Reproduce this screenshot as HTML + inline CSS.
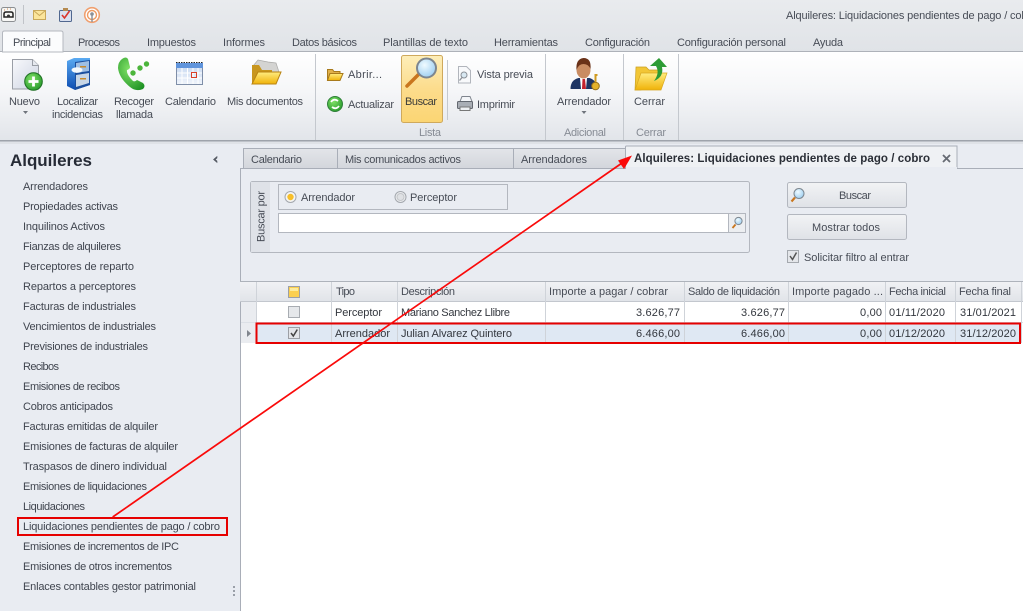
<!DOCTYPE html>
<html><head><meta charset="utf-8"><style>
html,body{margin:0;padding:0;width:1023px;height:611px;overflow:hidden;background:#fff}
svg{display:block}
text{font-family:"Liberation Sans",sans-serif;font-size:11px;fill:#474c56}
.s text{fill:#40454f}
.g text{fill:#868b94}
.d text{fill:#33373e}
</style></head><body>
<svg width="1023" height="611" viewBox="0 0 1023 611" xmlns="http://www.w3.org/2000/svg">
<defs>
<linearGradient id="rib" x1="0" y1="0" x2="0" y2="1"><stop offset="0" stop-color="#fff"/><stop offset=".45" stop-color="#f5f6f8"/><stop offset="1" stop-color="#e2e5ea"/></linearGradient>
<linearGradient id="top" x1="0" y1="0" x2="0" y2="1"><stop offset="0" stop-color="#e9ebee"/><stop offset="1" stop-color="#e0e3e7"/></linearGradient>
<linearGradient id="hl" x1="0" y1="0" x2="0" y2="1"><stop offset="0" stop-color="#fdeeb9"/><stop offset=".5" stop-color="#fcdc8c"/><stop offset="1" stop-color="#fbd573"/></linearGradient>
<linearGradient id="tab" x1="0" y1="0" x2="0" y2="1"><stop offset="0" stop-color="#e3e5e9"/><stop offset="1" stop-color="#d3d6dc"/></linearGradient>
<linearGradient id="hd" x1="0" y1="0" x2="0" y2="1"><stop offset="0" stop-color="#f1f2f5"/><stop offset="1" stop-color="#e0e3e8"/></linearGradient>
<linearGradient id="btn" x1="0" y1="0" x2="0" y2="1"><stop offset="0" stop-color="#f2f3f5"/><stop offset="1" stop-color="#dfe2e7"/></linearGradient>
<linearGradient id="yel" x1="0" y1="0" x2="0" y2="1"><stop offset="0" stop-color="#ffec80"/><stop offset="1" stop-color="#f0b208"/></linearGradient>
<linearGradient id="doc" x1="0" y1="0" x2="1" y2="1"><stop offset="0" stop-color="#f8f9fc"/><stop offset="1" stop-color="#cdd3e2"/></linearGradient>
<linearGradient id="blu" x1="0" y1="0" x2="0" y2="1"><stop offset="0" stop-color="#5aaaf2"/><stop offset="1" stop-color="#0d4cb0"/></linearGradient>
<linearGradient id="cal" x1="0" y1="0" x2="0" y2="1"><stop offset="0" stop-color="#c4d6f0"/><stop offset="1" stop-color="#f0f4fb"/></linearGradient>
<radialGradient id="grn" cx=".4" cy=".35" r=".8"><stop offset="0" stop-color="#7fe066"/><stop offset="1" stop-color="#1b8f22"/></radialGradient>
<radialGradient id="lens" cx=".4" cy=".35" r=".8"><stop offset="0" stop-color="#f0fbff"/><stop offset="1" stop-color="#8ec6ee"/></radialGradient>
</defs>

<!-- base -->
<rect width="1023" height="611" fill="#fff"/>
<rect width="1023" height="52" fill="url(#top)"/>
<rect y="51" width="1023" height="1" fill="#aeb2b9"/>
<rect y="52" width="1023" height="88" fill="url(#rib)"/>
<rect y="140" width="1023" height="1.5" fill="#9ea3ab"/>
<rect y="141.500" width="1023" height="3" fill="#dfe2e7"/>
<rect y="144" width="1023" height="137" fill="#e9ecf2"/>
<rect y="144" width="240" height="467" fill="#e9ecf2"/>
<rect x="240" y="168" width="1" height="443" fill="#a9aeb8"/>

<!-- title bar icons -->
<rect x="1.500" y="7.500" width="14" height="14" rx="2" fill="#f7f7f5" stroke="#8c8f92"/>
<path d="M4 17v-3q0-2 2-2h5q2 0 2 2v3z" fill="none" stroke="#222" stroke-width="1.500"/>
<circle cx="8.500" cy="16" r="1.500" fill="#333"/>
<path d="M4 10h1M7 9h1M10 9h1" stroke="#c85" stroke-width="1"/>
<rect x="23" y="5" width="1" height="19" fill="#c0c3c8"/>
<rect x="33.500" y="10.500" width="12" height="9" fill="#fbe59b" stroke="#c9a85a"/>
<path d="M33.500 10.500l6 5 6-5" fill="none" stroke="#c9a85a"/>
<rect x="59.500" y="10.500" width="12" height="11" rx="1" fill="#d9e0ef" stroke="#50678f"/>
<rect x="63" y="8" width="5" height="3" fill="#b58a50"/>
<path d="M62 15l2.500 3 5-7" fill="none" stroke="#d9342a" stroke-width="1.600"/>
<circle cx="92" cy="15" r="7.300" fill="#fff" stroke="#f0a070" stroke-width="1.600"/>
<circle cx="92" cy="15" r="4.500" fill="none" stroke="#ee9a62" stroke-width="1.400"/>
<circle cx="92" cy="14" r="1.800" fill="#8a8f96"/>
<rect x="91.300" y="15" width="1.400" height="7" fill="#8a8f96"/>

<text x="786" y="19" textLength="251">Alquileres: Liquidaciones pendientes de pago / cobro</text>

<!-- ribbon tabs -->
<path d="M2.500 52V33q0-2 2-2h56.500q2 0 2 2v19z" fill="#fbfcfd" stroke="#b4b8bf"/>
<g>
<text x="13" y="46" textLength="38">Principal</text>
<text x="78" y="46" textLength="42">Procesos</text>
<text x="147" y="46" textLength="49">Impuestos</text>
<text x="223" y="46" textLength="42">Informes</text>
<text x="292" y="46" textLength="65">Datos básicos</text>
<text x="383" y="46" textLength="85">Plantillas de texto</text>
<text x="494" y="46" textLength="64">Herramientas</text>
<text x="585" y="46" textLength="65">Configuración</text>
<text x="677" y="46" textLength="109">Configuración personal</text>
<text x="813" y="46" textLength="30">Ayuda</text>
</g>

<!-- ribbon separators -->
<rect x="315" y="54" width="1" height="86" fill="#c4c8ce"/>
<rect x="545" y="54" width="1" height="86" fill="#c4c8ce"/>
<rect x="623" y="54" width="1" height="86" fill="#c4c8ce"/>
<rect x="678" y="54" width="1" height="86" fill="#c4c8ce"/>
<rect x="447" y="60" width="1" height="60" fill="#c4c8ce"/>

<!-- Nuevo -->
<path d="M12.500 59.500h20l6 6v23.500h-26z" fill="url(#doc)" stroke="#9a9ea6"/>
<path d="M32.500 59.500v6h6" fill="#e6e9ef" stroke="#9a9ea6"/>
<circle cx="33.500" cy="81.500" r="8.800" fill="url(#grn)" stroke="#1d6f22"/>
<path d="M33.500 76.500v10M28.500 81.500h10" stroke="#fff" stroke-width="2.800"/>
<path d="M23 111h5l-2.500 3z" fill="#6f747c"/>

<!-- Localizar cabinet -->
<path d="M67 61l7-3h16v27l-15 5-8-4z" fill="url(#blu)"/>
<path d="M75 62l15-2v25l-15 5z" fill="#1c4f9e"/>
<path d="M76 63l13-2v10l-13 2z" fill="#9fbfe4"/>
<path d="M76 75l13-2v10l-13 4z" fill="#c8d6e6"/>
<rect x="80" y="66" width="6" height="1.500" fill="#c88a2c"/>
<rect x="80" y="78" width="6" height="1.500" fill="#c88a2c"/>
<ellipse cx="77" cy="70" rx="5.500" ry="2.800" fill="#f4f8fc"/>

<!-- Recoger phone -->
<path d="M122 59q4-3 6 0l2 8q0 2-3 3q-1 4 6 11q2 1 4-1l6 3q3 3 0 6q-7 3-13-2q-11-9-12-19q0-6 4-9z" fill="url(#grn)"/>
<circle cx="133" cy="73" r="2.700" fill="#4cb53c"/>
<circle cx="140" cy="68" r="2.700" fill="#4cb53c"/>
<circle cx="146.500" cy="64" r="2.700" fill="#4cb53c"/>

<!-- Calendario -->
<rect x="176.500" y="63.500" width="26" height="21" fill="url(#cal)" stroke="#7f8ea8"/>
<rect x="176" y="63" width="27" height="5" fill="#5f94dc"/>
<path d="M176 62.500h27" stroke="#222" stroke-dasharray="1.500 1"/>
<path d="M177 73h25M177 78h25M182 68v16M187.500 68v16M193 68v16M198 68v16" stroke="#fff" stroke-width="1"/>
<rect x="191.500" y="72.500" width="5" height="5" fill="none" stroke="#d9402a"/>

<!-- Mis documentos -->
<path d="M253 66l5-6 10 2 8 1 3 9-25 2z" fill="#d4d4d2" stroke="#a9a9a7" stroke-width=".7"/>
<path d="M252 65h7l3 5h10v4l-12 10h-8z" fill="#c8961e"/>
<path d="M258 72h23l-5 12h-24z" fill="url(#yel)" stroke="#b98412"/>

<!-- ribbon labels -->
<g>
<text x="9" y="105" textLength="31">Nuevo</text>
<text x="57" y="105" textLength="41">Localizar</text>
<text x="52" y="118" textLength="51">incidencias</text>
<text x="114" y="105" textLength="40">Recoger</text>
<text x="116" y="118" textLength="37">llamada</text>
<text x="165" y="105" textLength="51">Calendario</text>
<text x="227" y="105" textLength="76">Mis documentos</text>
<text x="348" y="78" textLength="34">Abrir...</text>
<text x="348" y="108" textLength="46">Actualizar</text>
<text x="477" y="78" textLength="56">Vista previa</text>
<text x="477" y="108" textLength="38">Imprimir</text>
<text x="557" y="105" textLength="54">Arrendador</text>
<text x="634" y="105" textLength="31">Cerrar</text>
</g>
<g class="g">
<text x="419" y="136" textLength="22">Lista</text>
<text x="564" y="136" textLength="42">Adicional</text>
<text x="636" y="136" textLength="30">Cerrar</text>
</g>
<path d="M581.500 111h5l-2.500 3z" fill="#6f747c"/>

<!-- small ribbon icons -->
<path d="M327.500 69.500h5l1.500 2h6v2h-10l-2.500 7z" fill="#e0b04a" stroke="#a87a1c"/>
<path d="M330 73.500h13l-3 7h-12.500z" fill="url(#yel)" stroke="#a87a1c"/>
<circle cx="335" cy="104" r="7.500" fill="url(#grn)" stroke="#2f7f3a"/>
<path d="M331 102q3-4 7-1M339 106q-3 4-7 1" fill="none" stroke="#fff" stroke-width="1.800"/>

<!-- Buscar big -->
<rect x="401.500" y="55.500" width="41" height="67" rx="2" fill="url(#hl)" stroke="#cfa95c"/>
<path d="M407 86l11-11" stroke="#c9761e" stroke-width="3.500" stroke-linecap="round"/>
<circle cx="426.500" cy="68" r="9.500" fill="url(#lens)" stroke="#7d868f" stroke-width="2"/>
<text x="405" y="105" textLength="32" style="fill:#3a3a38">Buscar</text>

<!-- Vista previa / imprimir -->
<path d="M458.500 66.500h8l4 4v12.500h-12z" fill="#f8f9fb" stroke="#b1b5bc"/>
<circle cx="464" cy="75" r="3" fill="#d8e8f2" stroke="#8a8f96"/>
<path d="M462 77.500l-2.500 3" stroke="#8a8f96" stroke-width="1.300"/>
<path d="M462 96.500h8l2 5h-12z" fill="#f4f6f9" stroke="#7f858e"/>
<rect x="457.500" y="101.500" width="15" height="7" rx="1" fill="#a9aeb5" stroke="#636870"/>
<rect x="460" y="107" width="10" height="3.500" fill="#eef0f3" stroke="#777"/>

<!-- Arrendador person -->
<path d="M570.500 89q0-9 8-11h11q7 2 8 11z" fill="#1f3564"/>
<path d="M580 78h7l-1 11h-5z" fill="#fff"/>
<path d="M582.500 79h2.500l1 10h-4z" fill="#c4222c"/>
<ellipse cx="583.500" cy="70" rx="7" ry="8.500" fill="#c98c62"/>
<path d="M576.500 70q-1-11 7-12q8 0 7 11q-2-5-7-5q-5 0-7 6z" fill="#6a3218"/>
<circle cx="595.500" cy="86" r="3.800" fill="#e4b22c" stroke="#96701a"/>
<path d="M595.500 82v-7h2" fill="none" stroke="#d09a20" stroke-width="2"/>

<!-- Cerrar folder -->
<path d="M636 67h10l3 3h11v6l-19 14h-6z" fill="#f2c636" stroke="#caa022" stroke-width=".7"/>
<path d="M641 73h26l-6 17h-26z" fill="url(#yel)" stroke="#d8a820" stroke-width=".7"/>
<path d="M654 81q6-8 2-15h-6l9-8 8 9h-5q2 10-8 14z" fill="#2d9c35"/>

<!-- sidebar -->
<text x="10" y="166" textLength="82" style="font-size:17px;font-weight:bold;fill:#262b36">Alquileres</text>
<path d="M217 156.500l-3.500 3 3.500 3v-1.500l-1.800-1.500 1.800-1.500z" fill="#555a63" stroke="#555a63" stroke-width=".6"/>
<g class="s">
<text x="23" y="190" textLength="65">Arrendadores</text>
<text x="23" y="210" textLength="95">Propiedades activas</text>
<text x="23" y="230" textLength="82">Inquilinos Activos</text>
<text x="23" y="250" textLength="98">Fianzas de alquileres</text>
<text x="23" y="270" textLength="111">Perceptores de reparto</text>
<text x="23" y="290" textLength="113">Repartos a perceptores</text>
<text x="23" y="310" textLength="113">Facturas de industriales</text>
<text x="23" y="330" textLength="133">Vencimientos de industriales</text>
<text x="23" y="350" textLength="125">Previsiones de industriales</text>
<text x="23" y="370" textLength="36">Recibos</text>
<text x="23" y="390" textLength="97">Emisiones de recibos</text>
<text x="23" y="410" textLength="90">Cobros anticipados</text>
<text x="23" y="430" textLength="135">Facturas emitidas de alquiler</text>
<text x="23" y="450" textLength="155">Emisiones de facturas de alquiler</text>
<text x="23" y="470" textLength="144">Traspasos de dinero individual</text>
<text x="23" y="490" textLength="124">Emisiones de liquidaciones</text>
<text x="23" y="510" textLength="62">Liquidaciones</text>
<text x="23" y="530" textLength="197">Liquidaciones pendientes de pago / cobro</text>
<text x="23" y="550" textLength="156">Emisiones de incrementos de IPC</text>
<text x="23" y="570" textLength="149">Emisiones de otros incrementos</text>
<text x="23" y="590" textLength="173">Enlaces contables gestor patrimonial</text>
</g>
<path d="M234 586v12" stroke="#9a9fa8" stroke-width="2" stroke-dasharray="2 2"/>

<!-- doc tabs -->
<rect x="243.500" y="148.500" width="94" height="20" fill="url(#tab)" stroke="#a9aeb8"/>
<rect x="337.500" y="148.500" width="176" height="20" fill="url(#tab)" stroke="#a9aeb8"/>
<rect x="513.500" y="148.500" width="112" height="20" fill="url(#tab)" stroke="#a9aeb8"/>
<rect x="240" y="168" width="783" height="1" fill="#a9aeb8"/>
<path d="M625.500 169v-22q0-1 1-1h330.500v23" fill="#eff1f4" stroke="#a9aeb8"/>
<rect x="626" y="167" width="331" height="3" fill="#e9ecf2"/>
<text x="251" y="163" textLength="51">Calendario</text>
<text x="345" y="163" textLength="116">Mis comunicados activos</text>
<text x="521" y="163" textLength="66">Arrendadores</text>
<text x="634" y="162" textLength="296" style="font-weight:bold;font-size:11.500px;fill:#2a2e36">Alquileres: Liquidaciones pendientes de pago / cobro</text>
<path d="M943 155l7 7M950 155l-7 7" stroke="#666b73" stroke-width="1.800"/>

<!-- search group -->
<rect x="250.500" y="181.500" width="499" height="71" rx="2" fill="#e9ecf2" stroke="#b3b7bf"/>
<rect x="251" y="182" width="19" height="70" fill="#dfe2e8"/>
<text transform="translate(264.500 242) rotate(-90)" x="0" y="0" textLength="51">Buscar por</text>
<rect x="278.500" y="184.500" width="229" height="25" fill="#e9ecf2" stroke="#b3b7bf"/>
<circle cx="290.500" cy="197" r="5.500" fill="#f5f5f3" stroke="#a4a8ae"/>
<circle cx="290.500" cy="197" r="3.200" fill="#f7bf2a"/>
<circle cx="400.500" cy="197" r="5.500" fill="#eceef0" stroke="#a4a8ae"/>
<circle cx="400.500" cy="197" r="3.500" fill="#dfe1e4" stroke="#c4c6ca"/>
<text x="301" y="201" textLength="54">Arrendador</text>
<text x="410" y="201" textLength="47">Perceptor</text>
<rect x="278.500" y="213.500" width="467" height="19" fill="#fff" stroke="#b3b7bf"/>
<rect x="728.500" y="213.500" width="17" height="19" fill="#eceef1" stroke="#b3b7bf"/>
<circle cx="738.500" cy="221" r="3.600" fill="url(#lens)" stroke="#7d868f"/>
<path d="M735.500 224.500l-3 3.500" stroke="#c9761e" stroke-width="1.800"/>

<!-- buttons -->
<rect x="787.500" y="182.500" width="119" height="25" rx="2" fill="url(#btn)" stroke="#b3b7bf"/>
<rect x="787.500" y="214.500" width="119" height="25" rx="2" fill="url(#btn)" stroke="#b3b7bf"/>
<circle cx="799" cy="193.500" r="5" fill="url(#lens)" stroke="#7d868f"/>
<path d="M795 197.500l-3.500 4" stroke="#c9761e" stroke-width="2.200"/>
<text x="839" y="199" textLength="32">Buscar</text>
<text x="812" y="231" textLength="68">Mostrar todos</text>
<rect x="787.500" y="250.500" width="11" height="12" fill="#e4e6ea" stroke="#a4a8ae"/>
<path d="M790 256l2.500 3.500 4-7" fill="none" stroke="#555" stroke-width="1.500"/>
<text x="804" y="261" textLength="105">Solicitar filtro al entrar</text>

<!-- grid -->
<rect x="240" y="281" width="783" height="21" fill="url(#hd)"/>
<rect x="240" y="281" width="783" height="1" fill="#aeb3bb"/>
<rect x="240" y="301" width="783" height="1" fill="#c3c7ce"/>
<rect x="241" y="302" width="16" height="41" fill="#eaecf0"/>
<rect x="257" y="323" width="763" height="20" fill="#dfe8f3"/>
<rect x="241" y="322" width="782" height="1" fill="#dce0e6"/>
<g stroke="#cfd3d9">
<path d="M256.500 282v61M331.500 282v61M397.500 282v61M545.500 282v61M684.500 282v61M788.500 282v61M885.500 282v61M955.500 282v61M1021.500 282v61"/>
</g>
<rect x="288.500" y="286.500" width="11" height="11" fill="#fbcf50" stroke="#9c9fa5"/>
<rect x="290" y="288" width="8" height="3" fill="#fdeb9c"/>
<rect x="288.500" y="306.500" width="11" height="11" fill="#e6e8eb" stroke="#a8acb2"/>
<rect x="288.500" y="327.500" width="11" height="11" fill="#e3e5e9" stroke="#9c9fa5"/>
<path d="M291 333l2.300 3 4-6.500" fill="none" stroke="#444" stroke-width="1.500"/>
<path d="M247 330l4 3.500-4 3.500z" fill="#80858d"/>
<text x="336" y="295" textLength="19">Tipo</text>
<text x="401" y="295" textLength="54">Descripción</text>
<text x="549" y="295" textLength="119">Importe a pagar / cobrar</text>
<text x="688" y="295" textLength="92">Saldo de liquidación</text>
<text x="792" y="295" textLength="91">Importe pagado ...</text>
<text x="889" y="295" textLength="57">Fecha inicial</text>
<text x="959" y="295" textLength="52">Fecha final</text>

<g class="d">
<text x="335" y="316" textLength="47">Perceptor</text>
<text x="401" y="316" textLength="109">Mariano Sanchez Llibre</text>
<text x="636" y="316" textLength="44">3.626,77</text>
<text x="741" y="316" textLength="44">3.626,77</text>
<text x="860" y="316" textLength="22">0,00</text>
<text x="889" y="316" textLength="56">01/11/2020</text>
<text x="960" y="316" textLength="56">31/01/2021</text>
<text x="335" y="337" textLength="55">Arrendador</text>
<text x="401" y="337" textLength="111">Julian Alvarez Quintero</text>
<text x="636" y="337" textLength="44">6.466,00</text>
<text x="741" y="337" textLength="44">6.466,00</text>
<text x="860" y="337" textLength="22">0,00</text>
<text x="889" y="337" textLength="56">01/12/2020</text>
<text x="960" y="337" textLength="56">31/12/2020</text>
</g>

<!-- red annotations -->
<rect x="18" y="518" width="209" height="17" fill="none" stroke="#e60000" stroke-width="2"/>
<rect x="256.500" y="323.500" width="763.500" height="19.500" fill="none" stroke="#e60000" stroke-width="2"/>
<path d="M112.700 517L622 163" stroke="#fa0a0a" stroke-width="1.700" fill="none"/>
<path d="M632 155.500L618 160.500 624 169z" fill="#fa0a0a"/>
</svg>
</body></html>
